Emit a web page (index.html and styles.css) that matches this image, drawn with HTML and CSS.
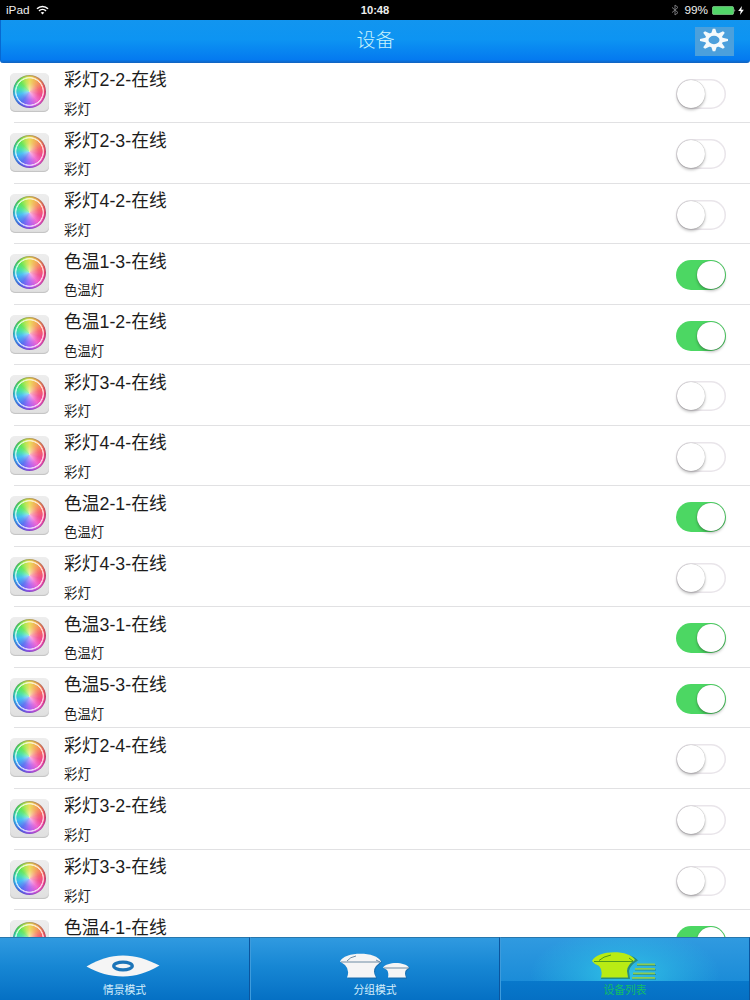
FILE: index.html
```html
<!DOCTYPE html>
<html lang="zh-CN">
<head>
    <meta charset="UTF-8">
    <meta name="viewport" content="width=device-width, initial-scale=1.0">
    <title>设备</title>
    <link rel="stylesheet" href="styles.css">
</head>
<body>
    <div class="app">
        <div class="status-bar">
            <div class="status-left">
                <span>iPad</span>
                <svg class="wifi" width="13" height="10" viewBox="0 0 13 10" fill="none" stroke="#fff" stroke-width="1.5">
                    <path d="M1 3.8C4 .6 9 .6 12 3.8"/>
                    <path d="M3 5.9C5 4 8 4 10 5.9"/>
                    <path d="M4.7 7.6C5.8 6.7 7.2 6.7 8.3 7.6L6.5 9.5z" fill="#fff" stroke="none"/>
                </svg>
            </div>
            <div class="status-time">10:48</div>
            <div class="status-right">
                <svg width="8" height="12" viewBox="0 0 8 12" fill="none" stroke="#77777a" stroke-width="1">
                    <path d="M1 3.4L7 8.6L4 11V1L7 3.4L1 8.6"/>
                </svg>
                <span>99%</span>
                <svg class="battery" width="24" height="9" viewBox="0 0 24 9">
                    <rect x=".4" y=".4" width="21.2" height="8.2" rx="1.6" fill="#52d769" stroke="#9ee8aa" stroke-width=".6"/>
                    <path d="M22.5 3Q24 4.5 22.5 6z" fill="#ddd"/>
                </svg>
                <svg class="bolt" width="6" height="9" viewBox="0 0 5 8" fill="#fff"><path d="M3.3 0L0 4.5H2.2L1.6 8L5 3.3H2.8z"/></svg>
            </div>
        </div>

        <div class="header">
            <h1>设备</h1>
            <button class="settings-btn" aria-label="设置">
                <svg width="30" height="24" viewBox="-15 -12 30 24">
                    <g id="gear" fill="#f4fafc" transform="scale(1.25 1)"></g>
                    <ellipse rx="7.2" ry="5.9" fill="none" stroke="#f4fafc" stroke-width="3.4"/>
                </svg>
            </button>
        </div>

        <div class="device-list" id="deviceList"></div>

        <div class="tab-bar">
            <div class="tab">
                <svg width="74" height="22" viewBox="0 0 74 22">
                    <path d="M.5 11.5C14 4 24 .5 37 .5C50 .5 60 4 73.5 10.5C60 18 50 21.5 37 21.5C24 21.5 12 18 .5 11.5z" fill="#f5f5f5"/>
                    <ellipse cx="37" cy="11" rx="9.3" ry="3.8" fill="none" stroke="#1c74b8" stroke-width="3.2"/>
                </svg>
                <span>情景模式</span>
            </div>
            <div class="tab">
                <svg width="70" height="26" viewBox="0 0 70 26">
                    <g fill="#245f91" opacity=".5" transform="translate(1 .7)">
                        <path d="M0 8.5C4 -2 37 -2 41 8.5L36 13Q32 18 36 25H7Q10 17 5 12z"/>
                        <path d="M43 14.5C47 9 65 9 69 14.5L66 17Q64 20 66 25H48Q49 20 47 17z"/>
                    </g>
                    <path d="M0 8.5C4 -2 37 -2 41 8.5L36 13Q32 18 36 24.5H7Q10 17 5 12z" fill="#f5f5f5"/>
                    <path d="M43 14.5C47 8.5 65 8.5 69 14.5L66 17Q64 20 66 24.5H48Q49 20 47 17z" fill="#f5f5f5"/>
                    <path d="M1 9H40M7 8Q10 4 16 3M36 7L40 9M44 15H69" fill="none" stroke="#6d8ba3"/>
                </svg>
                <span>分组模式</span>
            </div>
            <div class="tab active">
                <svg width="66" height="28" viewBox="0 0 66 28">
                    <path d="M1 9.5C6 -1 40 -1 46 8.5Q38 13 37 19L38 27H9Q12 18 7 14Q3 12 1 9.5z" fill="#277e60" opacity=".75"/>
                    <path d="M0 9C5 -2.5 38 -2.5 43 8Q35 13 35 19L36 25.5H9Q11 18 7 14Q2 12 0 9z" fill="#b9ec14"/>
                    <path d="M2 9.5H41M7 8.5Q11 4.5 19 3M37 6L41 9" fill="none" stroke="#4e9a1c"/>
                    <path d="M45 13.5H64M43 18H64M41 22.5H64M40 27H64" stroke="#247c68" stroke-opacity=".7" stroke-width="1.2"/>
                    <path d="M45 12.3H63M43 16.8H63M41 21.3H63M40 25.8H63" stroke="#8bcb52" stroke-width="1.7"/>
                </svg>
                <span>设备列表</span>
            </div>
        </div>
    </div>

    <script>
        const devices = [
            ['彩灯2-2', false],
            ['彩灯2-3', false],
            ['彩灯4-2', false],
            ['色温1-3', true],
            ['色温1-2', true],
            ['彩灯3-4', false],
            ['彩灯4-4', false],
            ['色温2-1', true],
            ['彩灯4-3', false],
            ['色温3-1', true],
            ['色温5-3', true],
            ['彩灯2-4', false],
            ['彩灯3-2', false],
            ['彩灯3-3', false],
            ['色温4-1', true]
        ];

        document.getElementById('deviceList').innerHTML = devices.map(([name, on]) => `
            <div class="device">
                <div class="device-icon"><div class="wheel"></div></div>
                <div class="device-info">
                    <div class="device-name">${name}-在线</div>
                    <div class="device-type">${name.startsWith('彩灯') ? '彩灯' : '色温灯'}</div>
                </div>
                <div class="switch${on ? ' on' : ''}"><div class="knob"></div></div>
            </div>`).join('');

        // gear teeth
        let teeth = '';
        for (let a = 0; a < 360; a += 45) {
            teeth += `<path d="M-2.4 -6L-1 -11.2H1L2.4 -6z" transform="rotate(${a})"/>`;
        }
        document.getElementById('gear').innerHTML = teeth;

        // tap to toggle
        document.getElementById('deviceList').addEventListener('click', e => {
            const sw = e.target.closest('.switch');
            if (sw) sw.classList.toggle('on');
        });
    </script>
</body>
</html>
```

FILE: styles.css
```css
* {
    box-sizing: border-box;
}

body {
    margin: 0;
    font-family: "Liberation Sans", "Noto Sans CJK SC", sans-serif;
    background: #fff;
    color: #1c1c1c;
}

.app {
    display: flex;
    flex-direction: column;
    height: 1000px;
    overflow: hidden;
}

.status-bar {
    display: grid;
    grid-template-columns: 1fr auto 1fr;
    align-items: center;
    flex: none;
    height: 20px;
    padding: 0 6px;
    background: #000;
    color: #eee;
    font-size: 11.8px;
    line-height: 20px;
}

.status-left, .status-right {
    display: flex;
    align-items: center;
    gap: 6px;
}

.status-right {
    justify-content: flex-end;
    gap: 5px;
}

.status-time {
    font-weight: bold;
    font-size: 11.2px;
}

.battery {
    margin-left: -1px;
}

.bolt {
    margin-left: -3px;
}

.header {
    display: grid;
    grid-template-columns: 1fr auto 1fr;
    align-items: center;
    flex: none;
    height: 42.8px;
    padding: 0 16px;
    background: linear-gradient(#1295ef, #0d94f2 45%, #047af0 92%, #1262bd);
    border-left: 1px solid #0868d0;
    border-radius: 0 0 3px 3px;
}

.header h1 {
    grid-column: 2;
    margin: 0;
    color: #c9f2fd;
    font-size: 19px;
    font-weight: 300;
    line-height: 42px;
}

.settings-btn {
    display: flex;
    align-items: center;
    justify-content: center;
    justify-self: end;
    width: 39px;
    height: 29px;
    padding: 0 2px 2px 0;
    border: 0;
    background: #4ba0dc;
}

.device-list {
    flex: 1;
    min-height: 0;
    overflow: hidden;
}

.device {
    display: flex;
    align-items: flex-start;
    height: 60.53px;
    padding: 0 24px 0 10px;
    background: linear-gradient(#e1e1e3, #e1e1e3) 14px 100% / 100% 1px no-repeat;
}

.device-icon {
    display: flex;
    align-items: center;
    justify-content: center;
    width: 39px;
    height: 39px;
    margin-top: 10px;
    padding-bottom: 2px;
    border-radius: 5px;
    background: linear-gradient(#ededed, #e0e0e0);
    box-shadow: inset 0 -1px 1px #c2c2c2;
}

.wheel {
    width: 33px;
    height: 33px;
    border-radius: 50%;
    background:
        radial-gradient(circle at 52% 50%, rgba(255, 255, 255, 0.6), rgba(255, 255, 255, 0.15) 35%, transparent 60%),
        radial-gradient(circle, transparent 12.8px, rgba(255, 255, 255, 0.75) 13.4px, rgba(255, 255, 255, 0.65) 14.2px, transparent 14.8px, rgba(60, 50, 120, 0.3) 16px),
        conic-gradient(#e8d94c, #f2a04c 35deg, #f4525c 75deg, #f03a82 105deg, #f05acb 140deg, #a455f2 180deg, #4f66f0 215deg, #2fb6f2 255deg, #34dda0 285deg, #5ae44d 315deg, #b4e448 340deg, #e8d94c);
}

.device-info {
    flex: 1;
    margin-left: 15px;
}

.device-name {
    margin-top: 5.5px;
    font-size: 17.8px;
    line-height: 25px;
}

.device-type {
    margin-top: 6.5px;
    font-size: 13.4px;
    line-height: 20px;
}

.switch {
    display: flex;
    width: 50px;
    height: 30px;
    margin-top: 16px;
    padding: 1px;
    border-radius: 15px;
    background: #fff;
    box-shadow: inset 0 0 0 1.5px #e9e5ea;
}

.knob {
    width: 28px;
    height: 28px;
    border-radius: 50%;
    background: #fff;
    box-shadow: 0 2px 3px rgba(0, 0, 0, 0.25), 0 0 1px rgba(0, 0, 0, 0.4);
}

.switch.on {
    justify-content: flex-end;
    background: #4cd763;
    box-shadow: none;
}

.tab-bar {
    display: grid;
    grid-template-columns: 250px 250px 250px;
    flex: none;
    height: 63px;
}

.tab {
    display: flex;
    flex-direction: column;
    align-items: center;
    justify-content: flex-end;
    padding-bottom: 2px;
    border-top: 1px solid #2777ad;
    border-left: 1px solid #3d9bdc;
    border-right: 1px solid #0b559e;
    background: linear-gradient(#309ae0, #1787d4 45%, #0570c4);
    color: #d5eefb;
    font-size: 10.8px;
    line-height: 16px;
}

.tab svg {
    margin-bottom: 3px;
}

.tab:first-child svg {
    margin: 0 4px 5px 0;
}

.tab:first-child {
    border-left: 0;
}

.tab.active {
    background:
        radial-gradient(ellipse 95px 46px at 50% 36px, #2fc2e6, rgba(47, 194, 230, 0.45) 50%, transparent) 0 0 / 100% 43px no-repeat,
        linear-gradient(#309ae0, #1b8cd8 43px, #0878cb 43px, #0570c4);
    color: #12bd68;
}

.tab.active svg {
    margin-bottom: 2px;
}
```
